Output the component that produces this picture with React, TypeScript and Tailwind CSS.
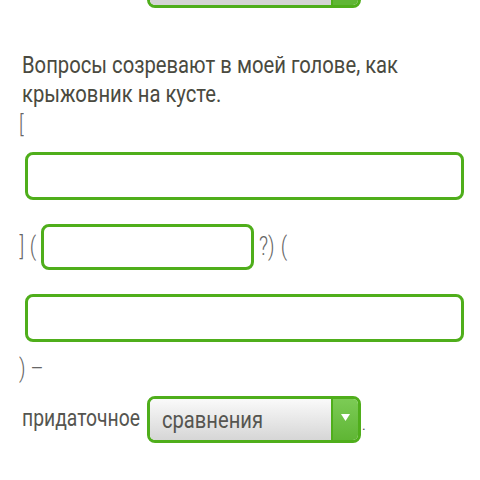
import React from "react";

function Select({ label }: { label: string }) {
  return (
    <div className="w-[214px] h-[47px] shrink-0 rounded-[8px] border-[3px] border-[#4fae1b] overflow-hidden flex">
      <div className="flex-1 bg-gradient-to-b from-[#fafafa] to-[#d6d6d6] flex items-center pl-[12px] text-[24px] text-[#555550]">
        <span className="inline-block origin-left scale-x-[0.84] whitespace-nowrap">{label}</span>
      </div>
      <div className="w-[27px] border-l-[2px] border-[#4fae1b] bg-gradient-to-b from-[#7ccb55] to-[#5fb634] flex items-center justify-center">
        <svg width="9" height="7" viewBox="0 0 9 7" className="mb-[5px]">
          <polygon points="0,0 9,0 4.5,7" fill="#ffffff" />
        </svg>
      </div>
    </div>
  );
}

function Input({ w }: { w: string }) {
  return <div className={`${w} rounded-[8px] border-[3px] border-[#4fae1b] bg-white`} />;
}

export default function App() {
  return (
    <div className="w-[480px] h-[480px] bg-white overflow-hidden font-['Roboto',sans-serif] text-[#4a4a40]">
      <div className="h-[8px] overflow-hidden flex items-end pl-[147px]">
        <div className="w-[214px] h-[47px] shrink-0 rounded-[8px] border-[3px] border-[#4fae1b] overflow-hidden flex">
          <div className="flex-1 bg-[#d4d4d4]" />
          <div className="w-[27px] border-l-[2px] border-[#4fae1b] bg-[#5fb634]" />
        </div>
      </div>
      <div className="pl-[22px] pt-[43px] text-[24px] leading-[29px]">
        <div className="origin-left scale-x-[0.843] whitespace-nowrap">
          Вопросы созревают в моей голове, как
          <br />
          крыжовник на кусте.
        </div>
      </div>
      <div className="pl-[19px] h-[32px] leading-[32px] font-light text-[#666] text-[24px]">
        <span className="inline-block origin-left scale-x-[0.8]">[</span>
      </div>
      <div className="pl-[25px] mt-[11px]">
        <Input w="w-[439px] h-[48px]" />
      </div>
      <div className="mt-[24px] flex items-center pl-[19px] h-[46px] font-light text-[#666] text-[25px]">
        <span className="inline-block scale-x-[0.8]">]</span>
        <span className="inline-block scale-x-[0.8] ml-[4px] mr-[4px]">(</span>
        <Input w="w-[213px] h-[46px]" />
        <span className="inline-block scale-x-[0.8] ml-[3px]">?)</span>
        <span className="inline-block scale-x-[0.8] ml-[3px]">(</span>
      </div>
      <div className="mt-[24px] pl-[25px]">
        <Input w="w-[439px] h-[48px]" />
      </div>
      <div className="pl-[19px] h-[40px] mt-[7px] flex items-center font-light text-[#666] text-[25px]">
        <span className="inline-block origin-left scale-x-[0.8]">) –</span>
      </div>
      <div className="mt-[7px] flex items-center pl-[22px]">
        <span className="w-[125px] text-[23px] text-[#555550]">
          <span className="inline-block origin-left scale-x-[0.84] whitespace-nowrap">придаточное</span>
        </span>
        <Select label="сравнения" />
        <span className="text-[14px] text-[#555] ml-[1px] mt-[12px]">.</span>
      </div>
    </div>
  );
}
